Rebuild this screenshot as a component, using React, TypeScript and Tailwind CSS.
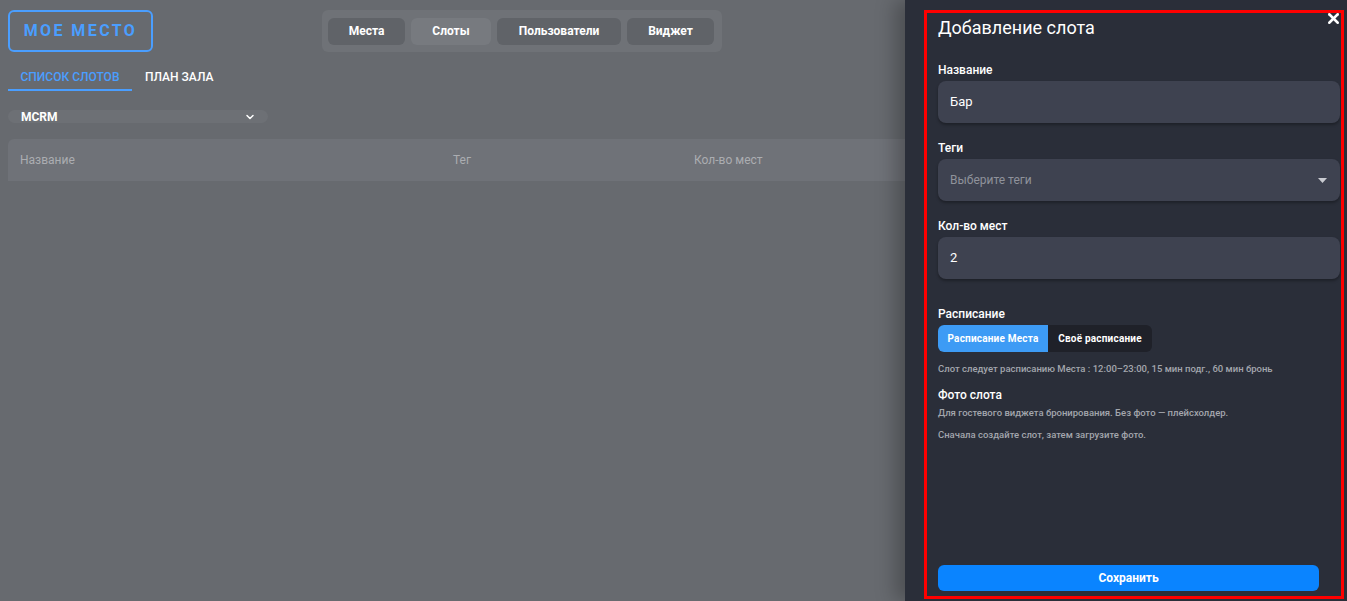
import { ChevronDown, X } from "lucide-react";

const tabs = [
  { name: "Места", w: "w-[77px]", active: false },
  { name: "Слоты", w: "w-[80px]", active: true },
  { name: "Пользователи", w: "w-[124px]", active: false },
  { name: "Виджет", w: "w-[87px]", active: false },
];

function Field({ label, children, className = "" }: { label: string; children: React.ReactNode; className?: string }) {
  return (
    <div className={className}>
      <div className="text-[12px] leading-[16px] font-medium text-white">{label}</div>
      <div className="mt-[3px] mr-[1px] h-[42px] rounded-[8px] bg-[#3e4250] shadow-[0_2px_3px_rgba(0,0,0,0.3)] flex items-center px-[12px] text-[13px]">
        {children}
      </div>
    </div>
  );
}

export default function App() {
  return (
    <div className="flex h-[601px] w-full overflow-hidden bg-[#676a6f] font-['Roboto',sans-serif]">
      {/* page under the drawer */}
      <main className="flex-1 pl-[8px] pt-[10px]">
        <div className="flex items-start">
          <div className="h-[42px] w-[145px] rounded-[6px] border-2 border-[#4a9eff] flex items-center justify-center text-[16px] font-bold tracking-[0.15em] text-[#4a9eff]">
            МОЕ МЕСТО
          </div>
          <nav className="ml-[169px] h-[42px] w-[400px] rounded-[6px] bg-[#6f7277] flex items-center gap-[6px] px-[6px]">
            {tabs.map((t) => (
              <button
                key={t.name}
                className={`${t.w} h-[27px] rounded-[6px] text-[12px] font-bold text-white ${t.active ? "bg-[#777a7f]" : "bg-[#606368]"}`}
              >
                {t.name}
              </button>
            ))}
          </nav>
        </div>

        <div className="mt-[15px] flex items-end text-[12px] font-medium">
          <div className="w-[124px] h-[24px] border-b-2 border-[#4a9eff] text-[#4a9eff] text-center leading-[20px]">СПИСОК СЛОТОВ</div>
          <div className="ml-[13px] h-[24px] leading-[20px] text-white">ПЛАН ЗАЛА</div>
        </div>

        <div className="mt-[19px] w-[260px] h-[13px] rounded-full bg-[#6d7075] flex items-center justify-between pl-[13px] pr-[12px]">
          <span className="text-[12px] font-bold text-white leading-none">MCRM</span>
          <ChevronDown size={12} strokeWidth={3} className="text-white" />
        </div>

        <div className="mt-[16px] h-[42px] rounded-tl-[6px] bg-[#6f7278] flex items-center text-[12px] text-[#abadb1]">
          <span className="ml-[12px] w-[433px]">Название</span>
          <span className="w-[241px]">Тег</span>
          <span>Кол-во мест</span>
        </div>
      </main>

      {/* drawer */}
      <aside className="relative w-[442px] shrink-0 bg-[#2a2e39] pt-[10px] pl-[19px] pr-[3px] pb-[2px] shadow-[-10px_0_18px_rgba(0,0,0,0.25)]">
        <button className="absolute right-[5px] top-[10px] text-white">
          <X size={17} strokeWidth={3.5} />
        </button>
        <div className="h-full border-[3px] border-[#ff0000] flex flex-col pl-[11px]">
          <h2 className="mt-[3px] text-[18px] leading-[24px] text-white">Добавление слота</h2>

          <Field label="Название" className="mt-[22px]">
            <span className="text-white">Бар</span>
          </Field>

          <Field label="Теги" className="mt-[17px]">
            <span className="flex-1 text-[12px] text-[#8f929b]">Выберите теги</span>
            <svg width="9" height="5" viewBox="0 0 9 5" className="mr-[1px]">
              <path d="M0 0h9L4.5 5z" fill="#c9cbd1" />
            </svg>
          </Field>

          <Field label="Кол-во мест" className="mt-[17px]">
            <span className="text-white">2</span>
          </Field>

          <div className="mt-[27px] text-[12px] leading-[16px] font-medium text-white">Расписание</div>
          <div className="mt-[3px] flex h-[27px] w-[214px] rounded-[6px] overflow-hidden bg-[#1f2129] text-[10px] font-bold text-white tracking-[0.02em]">
            <div className="w-[110px] bg-[#3d9bf5] flex items-center justify-center">Расписание Места</div>
            <div className="flex-1 flex items-center justify-center">Своё расписание</div>
          </div>

          <p className="mt-[10px] text-[9.5px] leading-[14px] font-medium text-[#a3a6ad]">
            Слот следует расписанию Места : 12:00–23:00, 15 мин подг., 60 мин бронь
          </p>

          <div className="mt-[11px] text-[12px] leading-[16px] font-medium text-white">Фото слота</div>
          <p className="mt-[3px] text-[9.5px] leading-[14px] font-medium text-[#a3a6ad]">
            Для гостевого виджета бронирования. Без фото — плейсхолдер.
          </p>
          <p className="mt-[8px] text-[9.5px] leading-[14px] font-medium text-[#a3a6ad]">
            Сначала создайте слот, затем загрузите фото.
          </p>

          <div className="flex-1" />
          <button className="mb-[5px] w-[381px] h-[26px] rounded-[6px] bg-[#0a84ff] text-[12px] font-bold text-white">
            Сохранить
          </button>
        </div>
      </aside>
    </div>
  );
}
